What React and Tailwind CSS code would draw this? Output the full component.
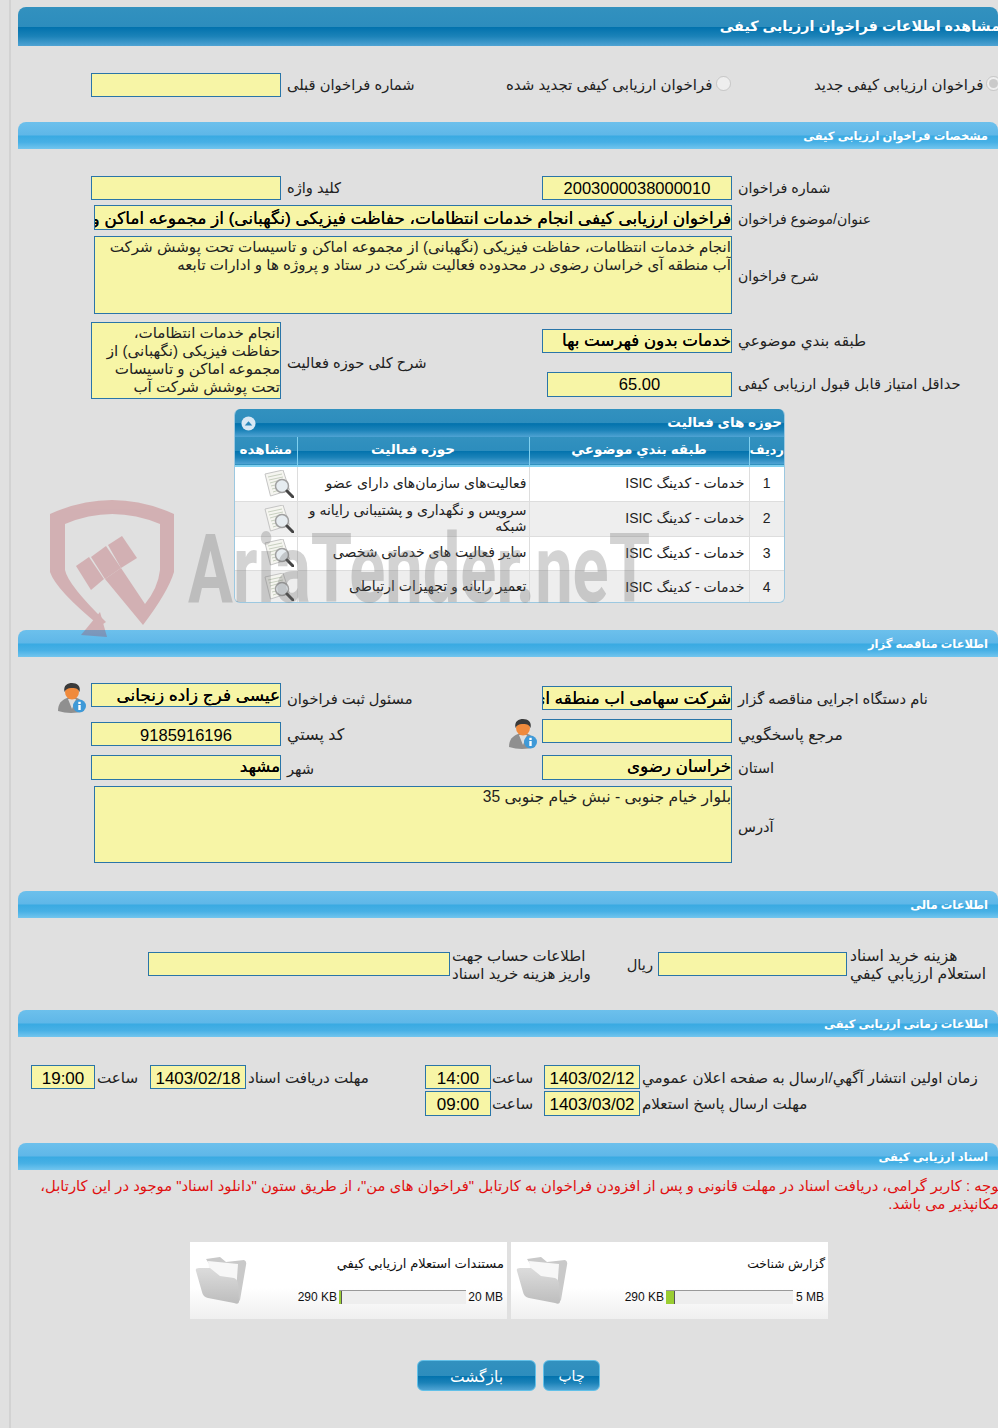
import React from "react";

const darkBar = "bg-[linear-gradient(to_bottom,#3291bf_0%,#2d8dbd_50%,#0272ad_52%,#1b82b8_75%,#4fa3d3_100%)]";
const lightBar = "bg-[linear-gradient(to_bottom,#6cc0ec_0%,#5fb7e8_48%,#39aae2_52%,#47b0e5_75%,#72c5ee_100%)]";

function Section({ children }) {
  return (
    <div className={`ml-[18px] w-[980px] h-[27px] rounded-t-[8px] ${lightBar} flex items-center justify-end pr-[10px] pt-[3px]`}>
      <span dir="rtl" className="text-[11.5px] font-bold text-white whitespace-nowrap">{children}</span>
    </div>
  );
}

function Box({ children, className = "", size = "text-[16.5px]", bold, center }) {
  return (
    <div
      dir="rtl"
      className={`shrink-0 bg-[#f7f5a6] border border-[#2a75a8] text-black leading-[22px] whitespace-nowrap overflow-hidden ${size} ${bold ? "[text-shadow:0.15px_0_0_#000]" : ""} ${center ? "text-center" : ""} ${className}`}
    >
      {children}
    </div>
  );
}

function Label({ children, className = "", size = "text-[14.7px]" }) {
  return (
    <span dir="rtl" className={`block text-left leading-[18px] text-[#222] whitespace-nowrap ${size} ${className}`}>
      {children}
    </span>
  );
}

function AreaBox({ children, className = "", size = "text-[15.1px]" }) {
  return (
    <div dir="rtl" className={`shrink-0 bg-[#f7f5a6] border border-[#2a75a8] text-[#222] leading-[18px] overflow-hidden ${size} ${className}`}>
      {children}
    </div>
  );
}

function UserIcon({ className = "" }) {
  return (
    <svg viewBox="0 0 28 30" className={`shrink-0 w-[28px] h-[30px] ${className}`}>
      <path d="M0 28 C0 20 4 17 9 15 L19 15 C24 17 26 21 26 28 Q13 32 0 28Z" fill="#8f8f8f" />
      <path d="M10 16 L14 26 L18 16Z" fill="#dedede" />
      <ellipse cx="14" cy="9" rx="7" ry="7.5" fill="#f08a3c" />
      <path d="M6.5 9 C5 2 10 0 14 0 C19 0 23 3 21.5 9 C20 5 17 5 13 5 C10 5 8 6 6.5 9Z" fill="#3a3a3a" />
      <circle cx="21.5" cy="23" r="6.5" fill="#3f9ad8" />
      <rect x="20.3" y="22" width="2.4" height="5" fill="#fff" />
      <rect x="20.3" y="18.8" width="2.4" height="2.2" fill="#fff" />
    </svg>
  );
}

function DocSearchIcon() {
  return (
    <svg viewBox="0 0 30 28" className="w-[30px] h-[28px]">
      <path d="M1 4 L19 0 L25.5 20 L6.5 26Z" fill="#f5f5f0" stroke="#c4c4c4" />
      <path d="M4 7 L18 4 M5 10 L19 7 M6 13 L13 11 M7 16 L11 15 M8 19 L12 18 M9 22 L15 20" stroke="#c8d0c0" strokeWidth="1" />
      <circle cx="18" cy="16" r="6.5" fill="#e6ecf0" stroke="#a0a0a0" strokeWidth="1.5" />
      <path d="M23 21 L29 27" stroke="#444" strokeWidth="3" strokeLinecap="round" />
    </svg>
  );
}

function FolderIcon() {
  return (
    <svg viewBox="0 0 54 50" className="shrink-0 w-[54px] h-[50px]">
      <defs>
        <linearGradient id="folderFront" x1="0" y1="0" x2="0" y2="1">
          <stop offset="0" stopColor="#dcdcdc" />
          <stop offset="1" stopColor="#bdbdbd" />
        </linearGradient>
      </defs>
      <path d="M12 3 L26 1 L32 6 L50 4 Q53 5 52 9 L46 44 Q44 48 40 46 Z" fill="#c9c9c9" />
      <path d="M14 5 L44 8 L42 36 L18 30Z" fill="#f7f7f7" />
      <path d="M2 15 Q1 12 5 12 L16 12 L26 20 L40 22 Q43 23 44 27 L45 45 Q45 49 40 47 L14 42 Q9 41 8 36Z" fill="url(#folderFront)" />
    </svg>
  );
}

function FileCard({ title, titleSize, limit, barClass, sizeWidth }) {
  return (
    <div className="w-[317px] h-[77px] bg-[linear-gradient(to_bottom,#ffffff_60%,#efefef_100%)] flex pl-[4px] pt-[14px]">
      <FolderIcon />
      <div className="flex-1 pr-[3px]">
        <div dir="rtl" className={`leading-[16px] text-[#111] whitespace-nowrap ${titleSize}`}>{title}</div>
        <div className="flex items-center justify-end mt-[18px] h-[14px] text-[12px] text-[#111] pr-[1px]">
          <span className="whitespace-nowrap mr-[2px]">290 KB</span>
          <div className="h-[14px] w-[127px] bg-[#eeeeee] border-t border-[#999]">
            <div className={`h-full bg-[#9acd32] border-r border-[#555] ${barClass}`} />
          </div>
          <span className={`whitespace-nowrap text-right ${sizeWidth}`}>{limit}</span>
        </div>
      </div>
    </div>
  );
}

const rows = [
  ["1", "فعالیت‌های سازمان‌های دارای عضو", "h-[35px]", "bg-white"],
  ["2", "سرویس و نگهداری و پشتیبانی رایانه و شبکه", "h-[35px]", "bg-[#eeeeee]"],
  ["3", "سایر فعالیت های خدماتی شخصی", "h-[34px]", "bg-white"],
  ["4", "تعمیر رایانه و تجهیزات ارتباطی", "h-[34px]", "bg-[#eeeeee]"],
];

function ActivityTable() {
  return (
    <div className="ml-[234px] w-[551px] h-[194px] rounded-[6px] border border-[#9cc8e0] border-t-0 overflow-hidden">
      <div className={`h-[28px] ${darkBar} flex items-center justify-between pl-[6px] pr-[2px]`}>
        <svg viewBox="0 0 16 16" className="w-[15px] h-[15px]">
          <circle cx="8" cy="8" r="7.5" fill="#d8e8f4" />
          <path d="M4 10 L8 5.5 L12 10Z" fill="#2b87ba" />
        </svg>
        <span dir="rtl" className="text-[13.5px] font-bold text-white whitespace-nowrap">حوزه های فعالیت</span>
      </div>
      <table dir="rtl" className="w-[549px] table-fixed border-collapse text-[14px] text-[#222]">
        <colgroup>
          <col className="w-[35px]" />
          <col className="w-[220px]" />
          <col className="w-[232px]" />
          <col className="w-[62px]" />
        </colgroup>
        <thead>
          <tr className={`h-[29px] ${darkBar} text-white text-[13.5px] font-bold border-b-2 border-[#7fd0ef]`}>
            <th className="border-l border-[#7fd0ef] font-bold pb-[2px] whitespace-nowrap text-[13px]">ردیف</th>
            <th className="border-l border-[#7fd0ef] font-bold pb-[2px]">طبقه بندي موضوعي</th>
            <th className="border-l border-[#7fd0ef] font-bold pb-[2px]">حوزه فعالیت</th>
            <th className="font-bold pb-[2px]">مشاهده</th>
          </tr>
        </thead>
        <tbody>
          {rows.map(([num, name, height, bg]) => (
            <tr key={num} className={`${height} ${bg} border-b border-[#dddddd]`}>
              <td className="border-l border-[#dddddd] text-center">{num}</td>
              <td className="border-l border-[#dddddd] pr-[4px] text-right">خدمات - کدینگ ISIC</td>
              <td className="border-l border-[#dddddd] pr-[2px] pl-[2px] pb-[2px] leading-[16px] text-right">{name}</td>
              <td>
                <div className="flex justify-start pr-[3px]">
                  <DocSearchIcon />
                </div>
              </td>
            </tr>
          ))}
        </tbody>
      </table>
    </div>
  );
}

function Watermark() {
  return (
    <div className="absolute left-0 top-0 w-[998px] h-[700px] pointer-events-none overflow-hidden">
      <svg viewBox="0 0 998 700" className="absolute left-0 top-0 w-[998px] h-[700px]">
        <g fill="#b0323c" opacity="0.27">
          <path d="M50 514 Q112 486 174 514 L174 572 Q168 592 143 625 L105 579 L121 568 L145 604 Q158 588 160 570 L160 524 Q112 504 65 524 L65 570 Q68 585 106 622 L100 626 Q56 590 50 572Z" />
          <path d="M100 612 L81 635 L107 637Z" />
          <path d="M76 566 L89 557 L104 579 L91 590Z" />
          <path d="M91 557 L106 546 L121 568 L105 579Z" />
          <path d="M108 545 L122 536 L137 558 L121 568Z" />
        </g>
      </svg>
      <div className="absolute left-[188px] top-[509px] origin-left scale-x-[0.696] whitespace-nowrap text-[96px] leading-[120px] font-bold text-[#707070] opacity-30 [font-family:'Roboto',sans-serif]">
        AriaTender.neT
      </div>
    </div>
  );
}

export default function App() {
  return (
    <div className="relative w-[998px] h-[1428px] overflow-hidden bg-[#e0e0e0] pt-[7px] [font-family:'Liberation_Sans','DejaVu_Sans',sans-serif]">
      <div className="absolute left-[9px] top-0 bottom-0 w-[2px] bg-[#d2d2d2]" />

      <div className={`ml-[18px] w-[980px] h-[39px] rounded-t-[8px] ${darkBar} flex items-center justify-end`}>
        <span dir="rtl" className="text-[14.3px] font-bold text-white whitespace-nowrap -mr-[2px]">مشاهده اطلاعات فراخوان ارزیابی کیفی</span>
      </div>

      <div className="mt-[27px] h-[24px] grid grid-cols-[506px_308px_184px] items-center">
        <div className="flex items-center pl-[91px]">
          <Box className="w-[190px] h-[24px]" />
          <Label className="ml-[6px]">شماره فراخوان قبلی</Label>
        </div>
        <div className="flex items-center">
          <Label size="text-[15px]">فراخوان ارزیابی کیفی تجدید شده</Label>
          <input type="radio" disabled className="shrink-0 ml-[4px] w-[15px] h-[15px] -mt-[4px]" />
        </div>
        <div className="flex items-center">
          <Label size="text-[15px]">فراخوان ارزیابی کیفی جدید</Label>
          <input type="radio" disabled defaultChecked className="shrink-0 ml-[3px] w-[15px] h-[15px] -mt-[4px]" />
        </div>
      </div>

      <div className="mt-[25px]">
        <Section>مشخصات فراخوان ارزیابی کیفی</Section>
      </div>

      <div className="mt-[27px] h-[24px] grid grid-cols-[542px_456px] items-center">
        <div className="flex items-center pl-[91px]">
          <Box className="w-[190px] h-[24px]" />
          <Label className="ml-[6px]">کلید واژه</Label>
        </div>
        <div className="flex items-center">
          <Box center className="w-[190px] h-[24px]">2003000038000010</Box>
          <Label size="text-[14.3px]" className="ml-[6px]">شماره فراخوان</Label>
        </div>
      </div>

      <div className="mt-[5px] flex items-center pl-[94px]">
        <Box bold size="text-[16.9px]" className="w-[638px] h-[25px] pt-[2px]">فراخوان ارزیابی کیفی انجام خدمات انتظامات، حفاظت فیزیکی (نگهبانی) از مجموعه اماکن و تاسیسات تحت پوشش شرکت آب منطقه ای خراسان رضوی</Box>
        <Label size="text-[14.1px]" className="ml-[6px] mt-[2px]">عنوان/موضوع فراخوان</Label>
      </div>

      <div className="mt-[6px] flex items-center pl-[94px]">
        <AreaBox className="w-[638px] h-[78px] pt-[1px]">
          انجام خدمات انتظامات، حفاظت فیزیکی (نگهبانی) از مجموعه اماکن و تاسیسات تحت پوشش شرکت
          <br />
          آب منطقه آی خراسان رضوی در محدوده فعالیت شرکت در ستاد و پروژه ها و ادارات تابعه
        </AreaBox>
        <Label size="text-[14px]" className="ml-[6px] mt-[2px]">شرح فراخوان</Label>
      </div>

      <div className="mt-[8px] flex">
        <div className="w-[542px] flex items-center pl-[91px]">
          <AreaBox className="w-[190px] h-[77px] pt-[1px]">
            انجام خدمات انتظامات،
            <br />
            حفاظت فیزیکی (نگهبانی) از
            <br />
            مجموعه اماکن و تاسیسات
            <br />
            تحت پوشش شرکت آب
          </AreaBox>
          <Label className="ml-[6px] mt-[4px]">شرح کلی حوزه فعالیت</Label>
        </div>
        <div>
          <div className="mt-[7px] flex items-center">
            <Box bold size="text-[16.7px]" className="w-[190px] h-[24px]">خدمات بدون فهرست بها</Box>
            <Label size="text-[15.2px]" className="ml-[6px]">طبقه بندي موضوعي</Label>
          </div>
          <div className="mt-[19px] flex items-center pl-[5px]">
            <Box center className="w-[185px] h-[25px]">65.00</Box>
            <Label className="ml-[6px] -mt-[2px]">حداقل امتیاز قابل قبول ارزیابی کیفی</Label>
          </div>
        </div>
      </div>

      <div className="mt-[10px]">
        <ActivityTable />
      </div>

      <div className="mt-[27px]">
        <Section>اطلاعات مناقصه گزار</Section>
      </div>

      <div className="mt-[26px] flex">
        <div className="w-[505px]">
          <div className="flex items-center h-[24px] pl-[58px]">
            <UserIcon className="mt-[6px]" />
            <Box bold size="text-[16.9px]" className="ml-[5px] w-[190px] h-[24px] pt-[1px]">عیسی فرج زاده زنجانی</Box>
            <Label className="ml-[6px] mt-[8px]">مسئول ثبت فراخوان</Label>
          </div>
          <div className="mt-[15px] flex items-center pl-[91px]">
            <Box center className="w-[190px] h-[24px] pt-[1px]">9185916196</Box>
            <Label size="text-[16px]" className="ml-[6px] mt-[2px]">کد پستي</Label>
          </div>
          <div className="mt-[9px] flex items-center pl-[91px]">
            <Box bold size="text-[16.7px]" className="w-[190px] h-[25px]">مشهد</Box>
            <Label className="ml-[6px] mt-[2px]">شهر</Label>
          </div>
        </div>
        <div>
          <div className="mt-[3px] flex items-center pl-[37px]">
            <Box bold size="text-[16.7px]" className="w-[190px] h-[24px] pt-[1px]">شرکت سهامی اب منطقه ای خراسان رضوی</Box>
            <Label className="ml-[6px] mt-[2px]">نام دستگاه اجرایی مناقصه گزار</Label>
          </div>
          <div className="mt-[9px] flex items-center h-[24px] pl-[4px]">
            <UserIcon className="mt-[6px]" />
            <Box className="ml-[5px] w-[190px] h-[24px]" />
            <Label size="text-[15.5px]" className="ml-[6px] mt-[8px]">مرجع پاسخگویي</Label>
          </div>
          <div className="mt-[12px] flex items-center pl-[37px]">
            <Box bold size="text-[16.7px]" className="w-[190px] h-[25px]">خراسان رضوی</Box>
            <Label className="ml-[6px]">استان</Label>
          </div>
        </div>
      </div>

      <div className="mt-[6px] flex items-center pl-[94px]">
        <AreaBox size="text-[15.6px]" className="w-[638px] h-[77px] pt-[1px]">بلوار خیام جنوبی - نبش خیام جنوبی 35</AreaBox>
        <Label className="ml-[6px] mt-[5px]">آدرس</Label>
      </div>

      <div className="mt-[28px]">
        <Section>اطلاعات مالی</Section>
      </div>

      <div className="mt-[34px] h-[24px] flex items-start pl-[148px]">
        <Box className="w-[302px] h-[24px]" />
        <Label size="text-[15px]" className="ml-[2px] w-[177px] -mt-[5px]">
          اطلاعات حساب جهت
          <br />
          واریز هزینه خرید اسناد
        </Label>
        <Label className="w-[24px] mt-[4px]">ریال</Label>
        <Box className="ml-[5px] w-[189px] h-[24px]" />
        <Label size="text-[15.6px]" className="ml-[3px] -mt-[5px]">
          هزینه خرید اسناد
          <br />
          استعلام ارزیابي کیفي
        </Label>
      </div>

      <div className="mt-[34px]">
        <Section>اطلاعات زمانی ارزیابی کیفی</Section>
      </div>

      <div className="mt-[28px] flex items-center pl-[31px]">
        <Box center size="text-[17px]" className="w-[64px] h-[24px] pt-[2px]">19:00</Box>
        <Label size="text-[15.1px]" className="ml-[2px] w-[53px] mt-[2px]">ساعت</Label>
        <Box center size="text-[17px]" className="w-[96px] h-[24px] pt-[2px]">1403/02/18</Box>
        <Label size="text-[15.1px]" className="ml-[2px] w-[175px] mt-[2px]">مهلت دریافت اسناد</Label>
        <Box center size="text-[17px]" className="ml-[2px] w-[66px] h-[24px] pt-[2px]">14:00</Box>
        <Label size="text-[15.1px]" className="ml-[1px] w-[52px] mt-[2px]">ساعت</Label>
        <Box center size="text-[17px]" className="w-[96px] h-[24px] pt-[2px]">1403/02/12</Box>
        <Label size="text-[15.1px]" className="ml-[2px] mt-[2px]">زمان اولین انتشار آگهي/ارسال به صفحه اعلان عمومي</Label>
      </div>
      <div className="mt-[2px] flex items-center pl-[425px]">
        <Box center size="text-[17px]" className="w-[66px] h-[25px] pt-[2px]">09:00</Box>
        <Label size="text-[15.1px]" className="ml-[1px] w-[52px]">ساعت</Label>
        <Box center size="text-[17px]" className="w-[96px] h-[25px] pt-[2px]">1403/03/02</Box>
        <Label size="text-[15.1px]" className="ml-[2px]">مهلت ارسال پاسخ استعلام</Label>
      </div>

      <div className="mt-[27px]">
        <Section>اسناد ارزیابی کیفی</Section>
      </div>

      <div dir="rtl" className="mt-[7px] ml-[38px] w-[965px] text-[14.8px] leading-[18px] text-[#e01010]">
        توجه : کاربر گرامی، دریافت اسناد در مهلت قانونی و پس از افزودن فراخوان به کارتابل "فراخوان های من"، از طریق ستون "دانلود اسناد" موجود در این کارتابل، امکانپذیر می باشد.
      </div>

      <div className="mt-[29px] pl-[190px] flex gap-[4px]">
        <FileCard title="مستندات استعلام ارزیابي کیفي" titleSize="text-[13.1px]" limit="20 MB" barClass="w-[3px]" sizeWidth="w-[37px]" />
        <FileCard title="گزارش شناخت" titleSize="text-[12.3px]" limit="5 MB" barClass="w-[9px]" sizeWidth="w-[31px]" />
      </div>

      <div className="mt-[41px] pl-[417px] flex gap-[7px]">
        <button className={`w-[119px] h-[31px] rounded-[6px] border border-[#62c0e8] pt-[2px] ${darkBar} text-white text-[15.5px]`}>بازگشت</button>
        <button className={`w-[57px] h-[31px] rounded-[6px] border border-[#62c0e8] pt-[2px] ${darkBar} text-white text-[14px]`}>چاپ</button>
      </div>

      <Watermark />
    </div>
  );
}
